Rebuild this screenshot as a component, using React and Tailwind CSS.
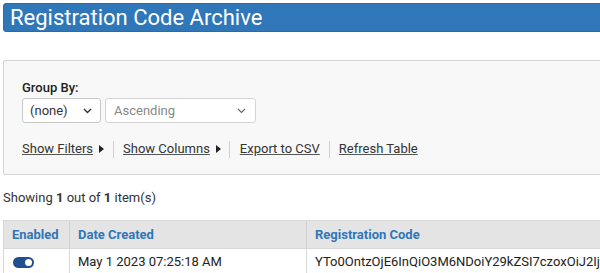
export default function App() {
  const link = "underline text-[13px] text-[#333] decoration-[#555]";
  return (
    <div className="w-[600px] h-[273px] overflow-hidden bg-white font-['Roboto',sans-serif] text-[#333]">
      <div className="pt-[3px] pl-[3px]">
        <div className="h-[29px] w-[620px] bg-[#2f77b8] rounded-[3px] border border-[#2a6aa5] flex items-center pl-[6px]">
          <span className="text-white text-[22px] leading-none">Registration Code Archive</span>
        </div>
      </div>
      <div className="mt-[28px] ml-[3px] w-[620px] h-[115px] border border-[#d4d4d4] bg-[#f8f8f8] rounded-[2px] pl-[18px] pt-[19px]">
        <div className="text-[13px] font-medium text-[#222] leading-[15px]">Group By:</div>
        <div className="flex gap-[4px] mt-[3px]">
          <div className="w-[79px] h-[25px] bg-white border border-[#c8c8c8] rounded-[3px] flex items-center justify-between pl-[7px] pr-[8px]">
            <span className="text-[13px] text-[#333]">(none)</span>
            <svg width="9" height="6" viewBox="0 0 9 6"><path d="M1 1l3.5 3.5L8 1" fill="none" stroke="#333" strokeWidth="1.4" /></svg>
          </div>
          <div className="w-[151px] h-[25px] bg-white border border-[#d4d4d4] rounded-[3px] flex items-center justify-between pl-[8px] pr-[9px]">
            <span className="text-[13px] text-[#888]">Ascending</span>
            <svg width="9" height="6" viewBox="0 0 9 6"><path d="M1 1l3.5 3.5L8 1" fill="none" stroke="#666" strokeWidth="1.1" /></svg>
          </div>
        </div>
        <div className="flex items-center mt-[16px] h-[20px]">
          <span className={link}>Show Filters</span>
          <svg className="ml-[6px]" width="5" height="8" viewBox="0 0 5 8"><path d="M0 0l5 4-5 4z" fill="#222" /></svg>
          <span className="ml-[9px] mr-[9px] h-[17px] w-px bg-[#d0d0d0]" />
          <span className={link}>Show Columns</span>
          <svg className="ml-[6px]" width="5" height="8" viewBox="0 0 5 8"><path d="M0 0l5 4-5 4z" fill="#222" /></svg>
          <span className="ml-[8px] mr-[10px] h-[17px] w-px bg-[#d0d0d0]" />
          <span className={link}>Export to CSV</span>
          <span className="ml-[9px] mr-[9px] h-[17px] w-px bg-[#d0d0d0]" />
          <span className={link}>Refresh Table</span>
        </div>
      </div>
      <div className="mt-[15px] ml-[3px] text-[13px] text-[#333] leading-[15px]">
        Showing <b className="font-bold">1</b> out of <b className="font-bold">1</b> item(s)
      </div>
      <div className="mt-[15px] ml-[3px] w-[640px] border-t border-l border-[#d8d8d8]">
        <div className="flex h-[28px] bg-[#e4e4e4] border-b border-[#d8d8d8]">
          <div className="w-[66px] shrink-0 border-r border-[#d0d0d0] flex items-center pl-[8px] text-[13px] font-bold text-[#2f77b8]">Enabled</div>
          <div className="w-[237px] shrink-0 border-r border-[#d0d0d0] flex items-center pl-[8px] text-[13px] font-bold text-[#2f77b8]">Date Created</div>
          <div className="flex-1 min-w-0 flex items-center pl-[8px] text-[13px] font-bold text-[#2f77b8]">Registration Code</div>
        </div>
        <div className="flex h-[26px] bg-white">
          <div className="w-[66px] shrink-0 border-r border-[#d8d8d8] flex items-center pl-[9px]">
            <div className="w-[21px] h-[11px] rounded-full bg-[#1d4f91] flex items-center justify-end pr-[2px]">
              <div className="w-[7px] h-[7px] rounded-full bg-white" />
            </div>
          </div>
          <div className="w-[237px] shrink-0 border-r border-[#d8d8d8] flex items-center pl-[8px] text-[13px] text-[#222]">May 1 2023 07:25:18 AM</div>
          <div className="flex-1 min-w-0 overflow-hidden flex items-center pl-[8px] text-[13px] text-[#222] whitespace-nowrap">YTo0OntzOjE6InQiO3M6NDoiY29kZSI7czoxOiJ2Ijt</div>
        </div>
      </div>
    </div>
  );
}
